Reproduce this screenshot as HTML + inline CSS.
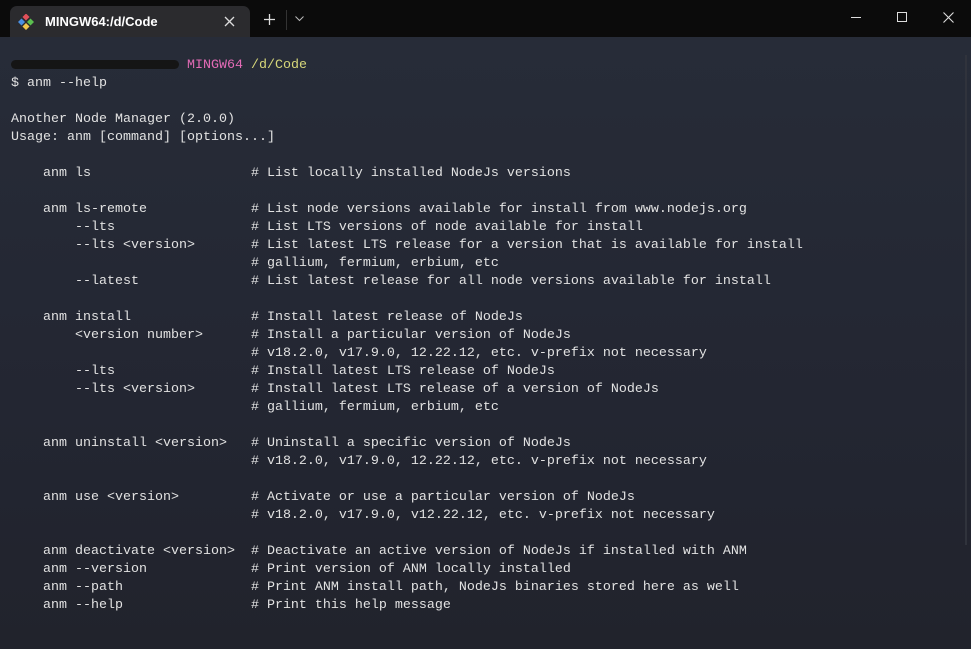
<!DOCTYPE html>
<html><head><meta charset="utf-8"><style>
*{margin:0;padding:0;box-sizing:border-box}
html,body{width:971px;height:649px;overflow:hidden;background:#0b0b0b}
.title{position:absolute;left:0;top:0;width:971px;height:37px;background:#0b0b0b}
.tab{position:absolute;left:10px;top:6px;width:240px;height:32px;background:#2b2b2e;border-radius:7px 7px 0 0}
.tab .t{position:absolute;left:35px;top:8px;font:600 13px "Liberation Sans",sans-serif;color:#fff}
.term{position:absolute;left:0;top:37px;width:971px;height:612px;background:linear-gradient(180deg,#272c38 0%,#232632 60%,#21232c 100%)}
pre{position:absolute;left:11px;top:20px;font-family:"Liberation Mono",monospace;font-size:13.33px;line-height:18px;color:#e2e2e2}
.m{color:#e36bb6}.y{color:#d6d77a}
.blur{display:inline-block;width:168px;height:9px;background:#151515;border-radius:5px;vertical-align:middle;margin-right:8px}
</style></head><body>
<div class="title">
<div class="tab">
<svg style="position:absolute;left:8px;top:8px" width="16" height="16" viewBox="0 0 16 16">
<rect x="5.5" y="0.5" width="5" height="5" transform="rotate(45 8 3)" fill="#e0505a"/>
<rect x="1" y="5.5" width="5" height="5" transform="rotate(45 3.5 8)" fill="#4a90e2"/>
<rect x="10" y="5.5" width="5" height="5" transform="rotate(45 12.5 8)" fill="#5bbf4f"/>
<rect x="5.5" y="10" width="5" height="5" transform="rotate(45 8 12.5)" fill="#f1c64a"/>
</svg>
<div class="t">MINGW64:/d/Code</div>
<svg style="position:absolute;left:214px;top:10px" width="11" height="11"><path d="M1 1L10 10M10 1L1 10" stroke="#ddd" stroke-width="1.3"/></svg>
</div>
<svg style="position:absolute;left:264px;top:14px" width="11" height="11"><path d="M5.5 0V11M0 5.5H11" stroke="#ddd" stroke-width="1.3"/></svg>
<div style="position:absolute;left:286px;top:10px;width:1px;height:20px;background:#333"></div>
<svg style="position:absolute;left:295px;top:16px" width="9" height="6"><path d="M0.5 0.5L4.5 4.5L8.5 0.5" stroke="#bbb" fill="none"/></svg>
<div style="position:absolute;left:851px;top:17px;width:10px;height:1px;background:#ddd"></div>
<div style="position:absolute;left:897px;top:12px;width:10px;height:10px;border:1px solid #ddd"></div>
<svg style="position:absolute;left:943px;top:12px" width="11" height="11"><path d="M0.5 0.5L10.5 10.5M10.5 0.5L0.5 10.5" stroke="#ddd" stroke-width="1.1"/></svg>
</div>
<div class="term">
<div style="position:absolute;left:965px;top:18px;width:2px;height:490px;background:#30333c"></div>
<pre><span class="blur"></span><span class="m">MINGW64</span> <span class="y">/d/Code</span>
$ anm --help

Another Node Manager (2.0.0)
Usage: anm [command] [options...]

    anm ls                    # List locally installed NodeJs versions

    anm ls-remote             # List node versions available for install from www.nodejs.org
        --lts                 # List LTS versions of node available for install
        --lts &lt;version&gt;       # List latest LTS release for a version that is available for install
                              # gallium, fermium, erbium, etc
        --latest              # List latest release for all node versions available for install

    anm install               # Install latest release of NodeJs
        &lt;version number&gt;      # Install a particular version of NodeJs
                              # v18.2.0, v17.9.0, 12.22.12, etc. v-prefix not necessary
        --lts                 # Install latest LTS release of NodeJs
        --lts &lt;version&gt;       # Install latest LTS release of a version of NodeJs
                              # gallium, fermium, erbium, etc

    anm uninstall &lt;version&gt;   # Uninstall a specific version of NodeJs
                              # v18.2.0, v17.9.0, 12.22.12, etc. v-prefix not necessary

    anm use &lt;version&gt;         # Activate or use a particular version of NodeJs
                              # v18.2.0, v17.9.0, v12.22.12, etc. v-prefix not necessary

    anm deactivate &lt;version&gt;  # Deactivate an active version of NodeJs if installed with ANM
    anm --version             # Print version of ANM locally installed
    anm --path                # Print ANM install path, NodeJs binaries stored here as well
    anm --help                # Print this help message</pre>
</div>
</body></html>
